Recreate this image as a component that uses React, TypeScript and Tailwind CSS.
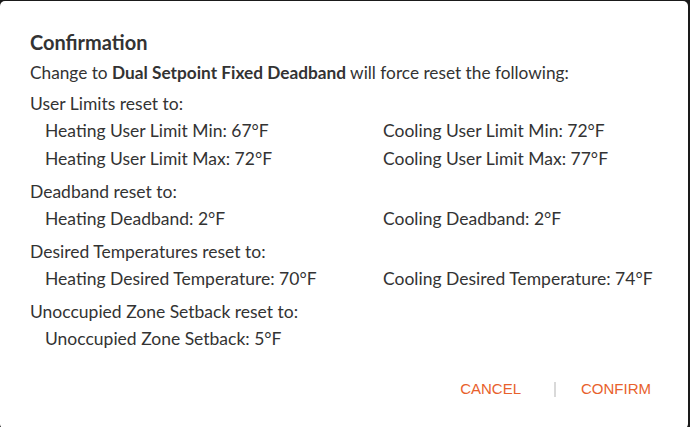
const sections = [
  {
    title: "User Limits reset to:",
    rows: [
      ["Heating User Limit Min: 67°F", "Cooling User Limit Min: 72°F"],
      ["Heating User Limit Max: 72°F", "Cooling User Limit Max: 77°F"],
    ],
  },
  {
    title: "Deadband reset to:",
    rows: [["Heating Deadband: 2°F", "Cooling Deadband: 2°F"]],
  },
  {
    title: "Desired Temperatures reset to:",
    rows: [["Heating Desired Temperature: 70°F", "Cooling Desired Temperature: 74°F"]],
  },
  {
    title: "Unoccupied Zone Setback reset to:",
    rows: [["Unoccupied Zone Setback: 5°F", ""]],
  },
];

export default function App() {
  return (
    <div className="h-[427px] w-[690px] bg-[#1a1a1a] overflow-hidden">
      <div className="mt-px w-[688px] h-[428px] bg-white rounded-[5px] pl-[30px] pr-[30px] pt-[27px] font-['Lato',sans-serif] text-[#333333]">
        <h2 className="text-[20px] leading-[28px] font-bold">Confirmation</h2>
        <p className="text-[17.25px] leading-[29px] mt-[2px]">
          Change to <span className="font-bold">Dual Setpoint Fixed Deadband</span> will force reset the following:
        </p>
        <div className="mt-[4px] flex flex-col gap-[6px] text-[17.5px]">
          {sections.map((s) => (
            <div key={s.title}>
              <div className="leading-[26px]">{s.title}</div>
              {s.rows.map((r, i) => (
                <div key={i} className="grid grid-cols-[338px_1fr] pl-[15px] leading-[28px]">
                  <span>{r[0]}</span>
                  <span>{r[1]}</span>
                </div>
              ))}
            </div>
          ))}
        </div>
        <div className="flex justify-end items-center mt-[25px] pr-[7px] font-['Liberation_Sans',Arial,sans-serif] text-[15px] text-[#e8612c]">
          <button className="uppercase">Cancel</button>
          <span className="ml-[33px] mr-[25px] w-[2px] h-[15px] bg-[#d9d9d9]" />
          <button className="uppercase">Confirm</button>
        </div>
      </div>
    </div>
  );
}
